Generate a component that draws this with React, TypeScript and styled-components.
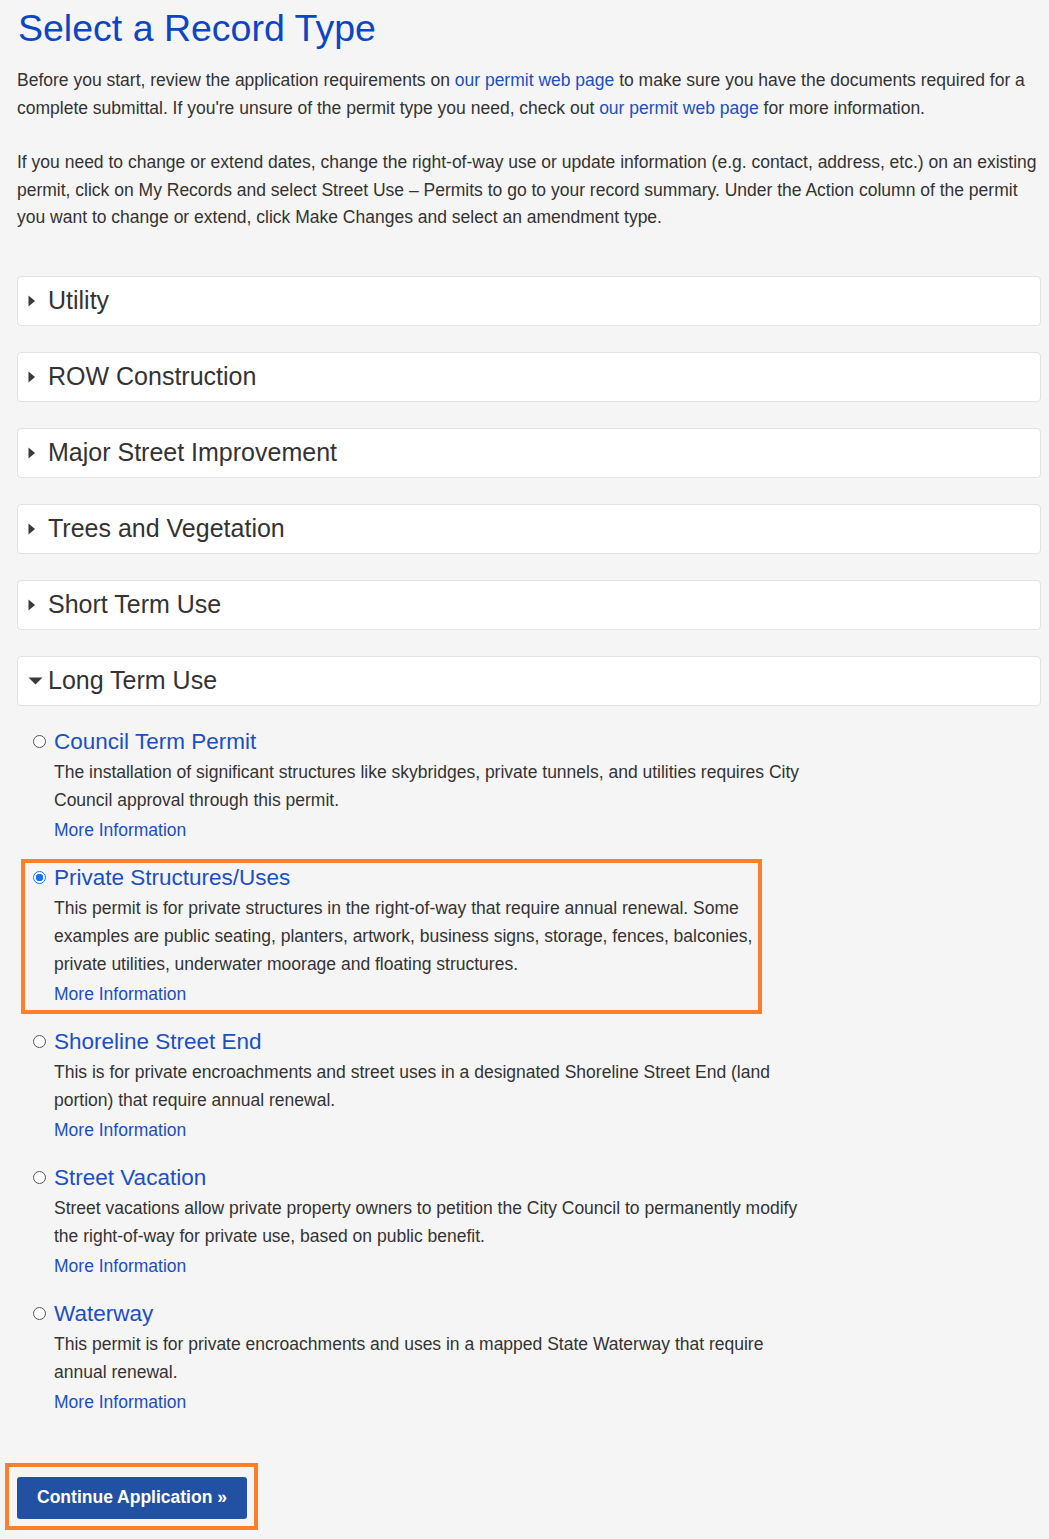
import React from 'react';
import styled, { createGlobalStyle } from 'styled-components';

const GlobalStyle = createGlobalStyle`
  body {
    margin: 0;
    background: #f5f5f5;
    font-family: 'Liberation Sans', Arial, sans-serif;
    color: #333;
  }
`;

const Page = styled.div`
  padding: 8px 8px 9px 17px;
`;

const Title = styled.h1`
  margin: 0 0 18px 1px;
  font-size: 37.5px;
  line-height: 41px;
  font-weight: 400;
  color: #0b46c4;
`;

const Para = styled.p`
  margin: 0 0 27px;
  font-size: 17.5px;
  line-height: 27.5px;
`;

const Link = styled.a`
  color: #1b4fc2;
  text-decoration: none;
  cursor: pointer;
`;

const Panels = styled.div`
  margin-top: 44px;
  display: flex;
  flex-direction: column;
  gap: 26px;
`;

const Panel = styled.div`
  height: 50px;
  box-sizing: border-box;
  background: #fff;
  border: 1px solid #e2e2e2;
  border-radius: 4px;
  display: flex;
  align-items: center;
  padding-left: 10px;
  font-size: 25px;
  color: #333;
`;

const Caret = styled.span`
  width: 20px;
  height: 12px;
  display: flex;
  align-items: center;
  box-sizing: border-box;
`;

const Options = styled.div`
  margin-top: 17px;
  display: flex;
  flex-direction: column;
  gap: 9px;
`;

const Option = styled.div<{ highlighted?: boolean }>`
  width: 741px;
  box-sizing: border-box;
  margin-left: 4px;
  border: 4px solid ${(p) => (p.highlighted ? '#fd7f2c' : 'transparent')};
  padding: 0 8px 2px 8px;
`;

const OptionHead = styled.div`
  display: flex;
  align-items: center;
  gap: 8px;
  height: 30px;
`;

const Radio = styled.span<{ checked?: boolean }>`
  width: 13px;
  height: 13px;
  box-sizing: border-box;
  border-radius: 50%;
  border: 1px solid ${(p) => (p.checked ? '#1a73e8' : '#555')};
  background: ${(p) =>
    p.checked ? 'radial-gradient(circle, #1a73e8 3.5px, #fff 4px)' : '#fff'};
  flex: none;
`;

const OptionTitle = styled.a`
  font-size: 22.5px;
  color: #1b4fc2;
  text-decoration: none;
  white-space: nowrap;
`;

const OptionBody = styled.div`
  padding-left: 21px;
`;

const Desc = styled.div`
  width: 752px;
  margin-top: 1px;
  font-size: 17.5px;
  line-height: 28px;
`;

const More = styled(Link)`
  display: block;
  margin-top: 2px;
  font-size: 17.5px;
  line-height: 28px;
`;

const ButtonFrame = styled.div`
  margin: 41px 0 0 -12px;
  width: max-content;
  border: 4px solid #fd7f2c;
  padding: 10px 7px 7px 8px;
`;

const Button = styled.button`
  height: 42px;
  width: 230px;
  background: #2251a3;
  color: #fff;
  border: none;
  border-radius: 3px;
  font-family: 'Liberation Sans', Arial, sans-serif;
  font-weight: 700;
  font-size: 17.5px;
  cursor: pointer;
`;

const RightCaret = () => (
  <svg width="8" height="12" viewBox="0 0 8 12">
    <path d="M0.5 0.5 L7 6 L0.5 11.5 Z" fill="#3a3a3a" />
  </svg>
);

const DownCaret = () => (
  <svg width="15" height="8" viewBox="0 0 15 8">
    <path d="M0.5 0.5 L14.5 0.5 L7.5 7.5 Z" fill="#3a3a3a" />
  </svg>
);

const categories = [
  'Utility',
  'ROW Construction',
  'Major Street Improvement',
  'Trees and Vegetation',
  'Short Term Use',
];

const options = [
  {
    title: 'Council Term Permit',
    desc: 'The installation of significant structures like skybridges, private tunnels, and utilities requires City Council approval through this permit.',
  },
  {
    title: 'Private Structures/Uses',
    desc: 'This permit is for private structures in the right-of-way that require annual renewal. Some examples are public seating, planters, artwork, business signs, storage, fences, balconies, private utilities, underwater moorage and floating structures.',
    selected: true,
  },
  {
    title: 'Shoreline Street End',
    desc: 'This is for private encroachments and street uses in a designated Shoreline Street End (land portion) that require annual renewal.',
  },
  {
    title: 'Street Vacation',
    desc: 'Street vacations allow private property owners to petition the City Council to permanently modify the right-of-way for private use, based on public benefit.',
  },
  {
    title: 'Waterway',
    desc: 'This permit is for private encroachments and uses in a mapped State Waterway that require annual renewal.',
  },
];

const App: React.FC = () => (
  <>
    <GlobalStyle />
    <Page>
      <Title>Select a Record Type</Title>
      <Para>
        Before you start, review the application requirements on{' '}
        <Link>our permit web page</Link> to make sure you have the documents
        required for a complete submittal. If you're unsure of the permit type
        you need, check out <Link>our permit web page</Link> for more
        information.
      </Para>
      <Para>
        If you need to change or extend dates, change the right-of-way use or
        update information (e.g. contact, address, etc.) on an existing permit,
        click on My Records and select Street Use – Permits to go to your record
        summary. Under the Action column of the permit you want to change or
        extend, click Make Changes and select an amendment type.
      </Para>
      <Panels>
        {categories.map((c) => (
          <Panel key={c}>
            <Caret>
              <RightCaret />
            </Caret>
            {c}
          </Panel>
        ))}
        <Panel>
          <Caret>
            <DownCaret />
          </Caret>
          Long Term Use
        </Panel>
      </Panels>
      <Options>
        {options.map((o) => (
          <Option key={o.title} highlighted={o.selected}>
            <OptionHead>
              <Radio checked={o.selected} />
              <OptionTitle>{o.title}</OptionTitle>
            </OptionHead>
            <OptionBody>
              <Desc>{o.desc}</Desc>
              <More>More Information</More>
            </OptionBody>
          </Option>
        ))}
      </Options>
      <ButtonFrame>
        <Button>Continue Application »</Button>
      </ButtonFrame>
    </Page>
  </>
);

export default App;
